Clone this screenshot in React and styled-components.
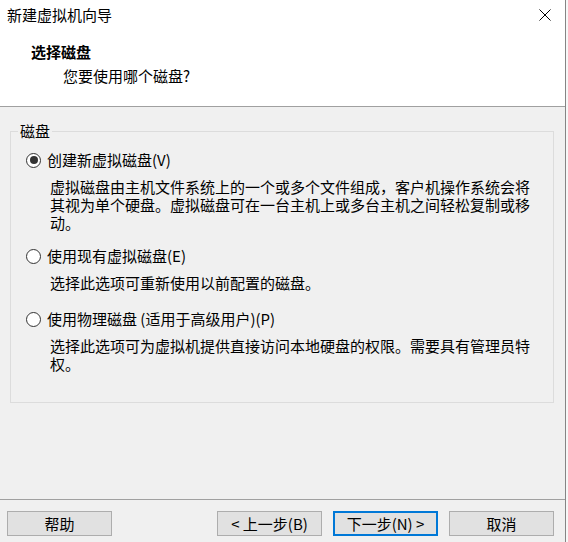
import React, { useState } from "react"
import styled, { createGlobalStyle } from "styled-components"

const GlobalStyle = createGlobalStyle`
  html, body {
    margin: 0;
    padding: 0;
    background: #f7f7f7;
  }
  body {
    font-family: "Noto Sans CJK SC", "Microsoft YaHei", sans-serif;
    font-size: 15px;
    color: #000;
  }
`

const Window = styled.div`
  width: 565px;
  height: 542px;
  display: flex;
  flex-direction: column;
  background: #f0f0f0;
  border-right: 1px solid #858585;
  overflow: hidden;
`

const TitleBar = styled.div`
  height: 30px;
  display: flex;
  align-items: center;
  justify-content: space-between;
  padding: 0 14px 0 7px;
  background: #fff;
  line-height: 20px;
`

const CloseButton = styled.button`
  border: none;
  background: transparent;
  padding: 0;
  width: 12px;
  height: 12px;
  display: flex;
  cursor: pointer;
`

const Header = styled.div`
  height: 77px;
  padding: 12px 0 0 31px;
  box-sizing: border-box;
  background: #fff;
  border-bottom: 1px solid #a0a0a0;
`

const Heading = styled.div`
  font-weight: bold;
  line-height: 20px;
`

const SubHeading = styled.div`
  margin: 4px 0 0 32px;
  line-height: 20px;
`

const Body = styled.div`
  flex: 1;
  padding: 14px 0 0 10px;
`

const GroupBox = styled.fieldset`
  width: 544px;
  height: 282px;
  box-sizing: border-box;
  margin: 0;
  padding: 9px 0 0 0;
  border: 1px solid #dcdcdc;
`

const Legend = styled.legend`
  padding: 0 2px;
  margin-left: 7px;
  line-height: 20px;
`

const Option = styled.div`
  margin-top: ${p => p.$gap || 0}px;
  padding-left: 15px;
`

const RadioRow = styled.label`
  display: flex;
  align-items: center;
  gap: 6px;
  height: 20px;
  line-height: 20px;
  cursor: pointer;
`

const RadioCircle = styled.span`
  width: 15px;
  height: 15px;
  box-sizing: border-box;
  border-radius: 50%;
  border: 1px solid #333;
  background: #fff;
  display: flex;
  align-items: center;
  justify-content: center;

  &::after {
    content: "";
    width: 8px;
    height: 8px;
    border-radius: 50%;
    background: ${p => (p.$checked ? "#333" : "transparent")};
  }
`

const Description = styled.p`
  margin: 8px 0 0 24px;
  width: 488px;
  line-height: 18px;
`

const Footer = styled.div`
  height: 43px;
  box-sizing: border-box;
  border-top: 1px solid #a0a0a0;
  padding: 11px 11px 0 7px;
  display: flex;
  gap: 11px;
`

const Spacer = styled.div`
  flex: 1;
`

const Button = styled.button`
  width: 105px;
  height: 25px;
  box-sizing: border-box;
  font-family: inherit;
  font-size: 15px;
  line-height: 20px;
  color: #000;
  background: #e1e1e1;
  border: ${p => (p.$default ? "2px solid #0078d7" : "1px solid #adadad")};
  padding: 0;
  cursor: pointer;
`

const options = [
  {
    key: "new",
    label: "创建新虚拟磁盘(V)",
    desc: "虚拟磁盘由主机文件系统上的一个或多个文件组成，客户机操作系统会将其视为单个硬盘。虚拟磁盘可在一台主机上或多台主机之间轻松复制或移动。",
    gap: 0,
  },
  {
    key: "existing",
    label: "使用现有虚拟磁盘(E)",
    desc: "选择此选项可重新使用以前配置的磁盘。",
    gap: 14,
  },
  {
    key: "physical",
    label: "使用物理磁盘 (适用于高级用户)(P)",
    desc: "选择此选项可为虚拟机提供直接访问本地硬盘的权限。需要具有管理员特权。",
    gap: 17,
  },
]

const App = () => {
  const [selected, setSelected] = useState("new")

  return (
    <Window>
      <GlobalStyle />
      <TitleBar>
        <span>新建虚拟机向导</span>
        <CloseButton aria-label="关闭">
          <svg width="12" height="12" viewBox="0 0 12 12">
            <path d="M0.5 0.5 L11.5 11.5 M11.5 0.5 L0.5 11.5" stroke="#000" strokeWidth="1" fill="none" />
          </svg>
        </CloseButton>
      </TitleBar>
      <Header>
        <Heading>选择磁盘</Heading>
        <SubHeading>您要使用哪个磁盘?</SubHeading>
      </Header>
      <Body>
        <GroupBox>
          <Legend>磁盘</Legend>
          {options.map(o => (
            <Option key={o.key} $gap={o.gap}>
              <RadioRow onClick={() => setSelected(o.key)}>
                <RadioCircle $checked={selected === o.key} />
                {o.label}
              </RadioRow>
              <Description>{o.desc}</Description>
            </Option>
          ))}
        </GroupBox>
      </Body>
      <Footer>
        <Button>帮助</Button>
        <Spacer />
        <Button>&lt; 上一步(B)</Button>
        <Button $default>下一步(N) &gt;</Button>
        <Button>取消</Button>
      </Footer>
    </Window>
  )
}

export default App
